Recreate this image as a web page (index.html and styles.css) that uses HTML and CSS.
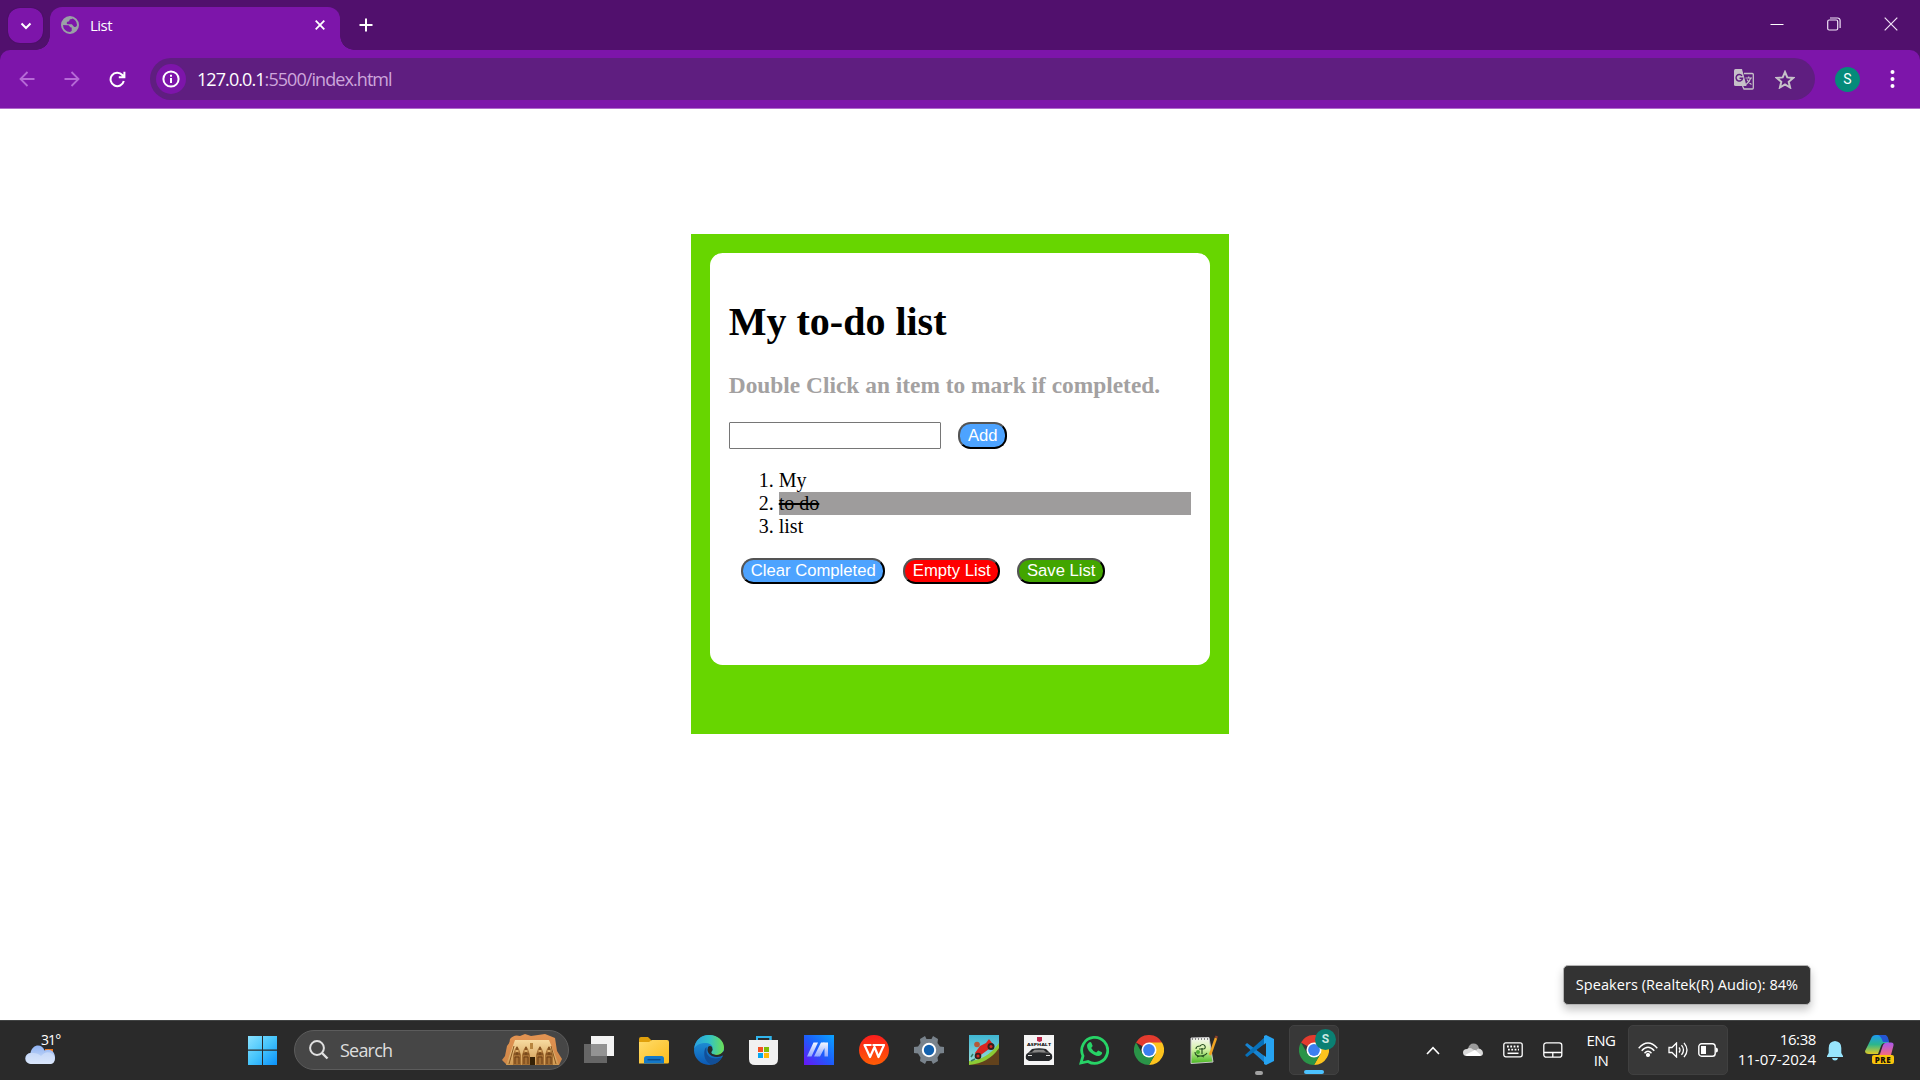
FILE: index.html
```html
<!DOCTYPE html>
<html lang="en">
<head>
<meta charset="utf-8">
<title>List</title>
<link rel="stylesheet" href="styles.css">
</head>
<body>
<svg width="0" height="0" class="defs">
  <defs>
    <linearGradient id="win" x1="0" y1="0" x2="1" y2="1"><stop offset="0" stop-color="#8be2ff"/><stop offset=".5" stop-color="#45c4fb"/><stop offset="1" stop-color="#0a91fb"/></linearGradient>
    <linearGradient id="cloud" x1="0" y1="0" x2="0" y2="1"><stop offset="0" stop-color="#8fb2f2"/><stop offset="1" stop-color="#d8e6fb"/></linearGradient>
    <linearGradient id="fold" x1="0" y1="0" x2="1" y2="1"><stop offset="0" stop-color="#ffdc6b"/><stop offset="1" stop-color="#fcbc1b"/></linearGradient>
    <linearGradient id="edgeTop" x1="0" y1="0" x2="1" y2="0"><stop offset="0" stop-color="#2a9fe0"/><stop offset=".5" stop-color="#31c2c8"/><stop offset="1" stop-color="#6cdf55"/></linearGradient>
    <linearGradient id="edgeLow" x1="0" y1="0" x2="0" y2="1"><stop offset="0" stop-color="#239ddd"/><stop offset="1" stop-color="#0c59b5"/></linearGradient>
    <linearGradient id="asus" x1="0" y1="1" x2="1" y2="0"><stop offset="0" stop-color="#6a13f5"/><stop offset=".5" stop-color="#1d5dfb"/><stop offset="1" stop-color="#0aa4ff"/></linearGradient>
    <linearGradient id="asusBar" x1="0" y1="0" x2="0" y2="1"><stop offset="0" stop-color="#f2f7ff"/><stop offset="1" stop-color="#8fa6ff"/></linearGradient>
    <linearGradient id="wps" x1="0" y1="0" x2="0" y2="1"><stop offset="0" stop-color="#fb1d1d"/><stop offset="1" stop-color="#ff5d05"/></linearGradient>
    <linearGradient id="sky" x1="0" y1="0" x2="0" y2="1"><stop offset="0" stop-color="#3fb6d2"/><stop offset="1" stop-color="#9fe0dc"/></linearGradient>
    <linearGradient id="cliff" x1="0" y1="0" x2="0" y2="1"><stop offset="0" stop-color="#e29352"/><stop offset="1" stop-color="#cf8747"/></linearGradient>
    <linearGradient id="temple" x1="0" y1="0" x2="0" y2="1"><stop offset="0" stop-color="#f7dba0"/><stop offset="1" stop-color="#cf9850"/></linearGradient>
    <linearGradient id="copA" x1="0" y1="0" x2="0" y2="1"><stop offset="0" stop-color="#1d9af0"/><stop offset=".5" stop-color="#2db68c"/><stop offset="1" stop-color="#e2ca25"/></linearGradient>
    <linearGradient id="copB" x1="0" y1="0" x2="0" y2="1"><stop offset="0" stop-color="#a857ee"/><stop offset="1" stop-color="#f56a80"/></linearGradient>
    <linearGradient id="grass" x1="0" y1="0" x2="0" y2="1"><stop offset="0" stop-color="#f6f6f6"/><stop offset=".45" stop-color="#d7f3a8"/><stop offset="1" stop-color="#46b81f"/></linearGradient>
    <symbol id="chrome" viewBox="0 0 30 30">
      <path d="M15 15 2 7.5A15 15 0 0 1 28 7.5Z" fill="#e33b2e"/>
      <path d="M15 7.5h13A15 15 0 0 1 15 30l6.5-11.2Z" fill="#fcc31e"/>
      <path d="M8.5 18.8 2 7.5A15 15 0 0 0 15 30l6.5-11.2Z" fill="#2a9448"/>
      <circle cx="15" cy="15" r="7.5" fill="#fff"/><circle cx="15" cy="15" r="5.9" fill="#3b7ff0"/>
    </symbol>
    <g id="statue"><path d="M1 22V12L3 6l2-3 2 3 2 6v10Z" fill="#a56f33"/><path d="M3 21v-7h4v7M5 4v8M2 11h6" fill="none" stroke="#6d3f14"/><path d="M3.500 7h3v2h-3Z" fill="#dcae68"/></g>
  </defs>
</svg>

<div class="screen">
  <header class="tabstrip">
    <button class="tab-search"><svg width="12" height="8" viewBox="0 0 12 8"><path d="M1.500 1.500 6 6l4.500-4.500" fill="none" stroke="#fff" stroke-width="2"/></svg></button>
    <div class="tab">
      <svg width="18" height="18" viewBox="0 0 18 18"><circle cx="9" cy="9" r="8" fill="none" stroke="#9aa0a6" stroke-width="2"/><path d="M9 1C4 1 1 5 1 9l5.500.2c2.300 0 2 2.300 4.200 2.300V15l-3 2c6 1 9.300-4 9.300-8-1.500 0-1 2-3 2s-1.700-2.800-4-2.800H7c-2 0-1.300-2.700.3-2.700 1.500 0 .7-2.300 2.400-2.300C11.200 3.200 12 2 12 1.500Z" fill="#9aa0a6"/></svg>
      <span class="tab-title">List</span>
      <svg class="tab-close" width="10" height="10" viewBox="0 0 10 10"><path d="m.7.700 8.600 8.600m0-8.600L.7 9.300" stroke="#fff" stroke-width="1.800"/></svg>
    </div>
    <svg class="new-tab" width="14" height="14" viewBox="0 0 14 14"><path d="M7 .5v13M.5 7h13" stroke="#fff" stroke-width="2"/></svg>
    <div class="window-controls">
      <svg width="14" height="14" viewBox="0 0 14 14"><path d="M.5 7.500h13" stroke="#fff" stroke-width="1"/></svg>
      <svg width="14" height="14" viewBox="0 0 14 14" fill="none" stroke="#f1e3f7" stroke-width="1.200"><rect x=".7" y="3" width="10" height="10" rx="1.500"/><path d="M3 1h7.500a2.500 2.500 0 0 1 2.600 2.500V11"/></svg>
      <svg width="14" height="14" viewBox="0 0 14 14"><path d="m.7.700 12.600 12.600m0-12.600L.7 13.300" stroke="#f1e3f7" stroke-width="1.200"/></svg>
    </div>
  </header>

  <nav class="toolbar">
    <svg width="16" height="16" viewBox="0 0 16 16" fill="none" stroke="#b66ad6" stroke-width="1.800"><path d="M15.500 8H2m6.500-7-7 7 7 7"/></svg>
    <svg width="16" height="16" viewBox="0 0 16 16" fill="none" stroke="#b66ad6" stroke-width="1.800"><path d="M.5 8H14M7.500 1l7 7-7 7"/></svg>
    <svg width="17" height="17" viewBox="0 0 17 17" fill="none" stroke="#fff" stroke-width="2"><path d="M14.800 10A6.700 6.700 0 1 1 13.300 4L15 6M15.400.8V6.300H9.800"/></svg>
    <div class="omnibox">
      <span class="site-info"><svg width="18" height="18" viewBox="0 0 18 18"><circle cx="9" cy="9" r="7.600" fill="none" stroke="#fff" stroke-width="2"/><path d="M9 8v5M9 4.700v2" stroke="#fff" stroke-width="2"/></svg></span>
      <span class="url"><b>127.0.0.1</b>:5500/index.html</span>
      <svg class="translate" width="20" height="21" viewBox="0 0 20 21"><path d="M10 4.500h8.300q1 0 1 1V19q0 1-1 1H10l-1.500-3" fill="none" stroke="#c6c1c8" stroke-width="1.300"/><path d="M1.500 0H8l4.500 17H1.500Q0 17 0 15.500v-14Q0 0 1.500 0Z" fill="#c6c1c8"/><path d="M8 6.800a3.300 3.300 0 1 0 .6 2.500H5.500" fill="none" stroke="#5f1e80" stroke-width="1.400"/><path d="M11.500 9H18m-3.300-1.500V9m2 0q-1 4-4.700 6.500m1-5q2 3.500 4.500 5" fill="none" stroke="#c6c1c8" stroke-width="1.200"/></svg>
      <svg width="20" height="19" viewBox="0 0 20 19"><path d="m10 2 2.300 5.400 5.900.5-4.500 3.900 1.400 5.700-5.100-3.100-5.100 3.100 1.400-5.700-4.500-3.900 5.900-.5Z" fill="none" stroke="#c6c1c8" stroke-width="2"/></svg>
    </div>
    <span class="avatar">S</span>
    <svg class="menu" width="5" height="20" viewBox="0 0 5 20" fill="#fff"><circle cx="2.500" cy="3" r="2"/><circle cx="2.500" cy="10" r="2"/><circle cx="2.500" cy="17" r="2"/></svg>
  </nav>

  <main class="page">
    <section class="board">
      <div class="card">
        <h1>My to-do list</h1>
        <h3>Double Click an item to mark if completed.</h3>
        <div class="entry"><input type="text"><button class="btn blue add">Add</button></div>
        <ol><li>My</li><li class="done">to do</li><li>list</li></ol>
        <div class="actions"><button class="btn blue clear">Clear Completed</button><button class="btn red empty">Empty List</button><button class="btn green save">Save List</button></div>
      </div>
    </section>
    <div class="tooltip"><span>Speakers (Realtek(R) Audio): 84%</span></div>
  </main>

  <footer class="taskbar">
    <div class="weather">
      <svg width="31" height="20" viewBox="0 0 31 20"><path d="M20 4h8v8h-8Z" fill="#f0761c"/><path d="M6 19a5.500 5.500 0 0 1-.5-11C7-1 17-2 19.500 5.500 27 3 30 8 30 12.500 30 17 28 19 25 19Z" fill="url(#cloud)"/><path d="M1 12q2-5 7-4 5 0 8 3 4-5 9-3.500 4 1.500 5 6-1 5.500-5 5.500H6q-5-1-5-7Z" fill="#dce8fb" opacity=".55"/></svg>
      <span>31°</span>
    </div>
    <svg class="start" width="30" height="30" viewBox="0 0 30 30" fill="url(#win)"><path d="M0 1h14v13.500H0ZM15 1h14v13.500H15ZM0 15.700h14V30H0ZM15 15.700h14V30H15Z"/></svg>
    <div class="search">
      <svg width="20" height="20" viewBox="0 0 20 20" fill="none" stroke="#e0e0e0" stroke-width="2"><circle cx="8" cy="8" r="6.900"/><path d="m13 13 5.500 5.500" stroke-width="2.400"/></svg>
      <span>Search</span>
      <svg class="art" width="60" height="32" viewBox="0 0 60 32"><path d="M0 26 3 22 5 12Q8 9 8 5 12 0 18 2L23 0 29 2 43 0 53 4 55 17 60 25 57 31H5Z" fill="url(#cliff)"/><path d="M13 6H47L57 31H4Z" fill="url(#temple)"/>
        <use href="#statue" x="10" y="9"/><use href="#statue" x="19" y="9"/><use href="#statue" x="33" y="9"/><use href="#statue" x="42" y="9"/><path d="M28 23h5v8h-5Z" fill="#352106"/><path d="M28 9h3v6h-3Z" fill="#b7853e"/><path d="M7 30 12 12m42 18L49 12" stroke="#8a561f"/></svg>
    </div>
    <div class="apps">
      <svg width="30" height="30" viewBox="0 0 30 30"><path d="M7 1h23v20H7Z" fill="#f3f3f3"/><path d="M0 9h23v19H0Z" fill="#777" opacity=".78"/></svg>
      <svg width="30" height="30" viewBox="0 0 30 30"><path d="M0 4q0-2 2-2h7l4 4v8H0Z" fill="#e0a00c"/><path d="M0 7h10l3-2h15q2 0 2 2v20q0 1.500-1.500 1.500H0Z" fill="url(#fold)"/><path d="M5 28.500v-5Q5 21 7.500 21h15q2.500 0 2.500 2.500v5Z" fill="#1479c9"/><path d="M8.500 24.700h13" stroke="#0a4b8c" stroke-width="1.500"/></svg>
      <svg width="30" height="30" viewBox="0 0 30 30"><circle cx="15" cy="15" r="15" fill="url(#edgeLow)"/><path d="M.2 14C1 5 7 0 15 0c9 0 15 6 15 12.500 0 5-4 7.500-8 7.500-3 0-5-1.500-5-2.500s1.500-1.500 1.500-4.500C18.500 9 14 7.500 10 8 5 8.500 1 11 .2 14Z" fill="url(#edgeTop)"/><path d="M12.500 12C8.500 15 9.500 29 19 29.500c4-1 7.500-4 9-7.500-6 3-15 1.500-15.500-5.500Z" fill="#124f98"/><path d="M14 12q-2 6 4 9 6 2.500 12-1v-4q-4 4-9 3.500-4-.5-3.600-2.500 2-2.500.6-5Q16 10 14 12Z" fill="#292a2b"/><path d="M20 19.500q7-.5 9.700-6.500-.5 7-7.700 7Z" fill="#6edc57"/></svg>
      <svg width="30" height="30" viewBox="0 0 30 30"><path d="M8 8V2h13.500v6" fill="none" stroke="#31b5ec" stroke-width="2"/><path d="M0 5h29v19q0 6-6 6H6q-6 0-6-6Z" fill="#f1f1f1"/><path d="M8 5V2h13.500v3" fill="none" stroke="#31b5ec" stroke-width="2"/><path d="M9 12h5v5H9Z" fill="#f35325"/><path d="M15 12h5v5h-5Z" fill="#81bc06"/><path d="M9 18h5v5H9Z" fill="#05a6f0"/><path d="M15 18h5v5h-5Z" fill="#ffba08"/></svg>
      <svg width="30" height="30" viewBox="0 0 30 30" fill="url(#asusBar)"><path d="M0 0h30v30H0Z" fill="url(#asus)"/><path d="M3 21.500 9.500 7.500H14L7.500 21.500Z"/><path d="M10 21.500 17 7.500h3.500L13.500 21.500Z"/><path d="M19.500 7.500H24v14h-3.500V13l-4.500 8.500h-3Z"/></svg>
      <svg width="30" height="30" viewBox="0 0 30 30"><circle cx="15" cy="15" r="15" fill="url(#wps)"/><path d="M12.500 10H5.500L11 22 15.500 12l4 10L25 10H13.500" fill="none" stroke="#fff" stroke-width="2.200" stroke-linejoin="round"/></svg>
      <svg width="30" height="30" viewBox="0 0 30 30"><path d="m11 1 1.500 3h5L19 1l5 3-.5 4 2.500 3.500 4 .5v6l-4 .5-2.500 4 .5 3.500-5 3-1.500-3h-5l-1.500 3-5-3 .5-3.500L4 18.500 0 18v-6l4-.5L6.500 8 6 4Z" fill="#79838c"/><circle cx="15" cy="15" r="7.200" fill="#fff"/><circle cx="15" cy="15" r="5.200" fill="#1261ae"/></svg>
      <svg width="30" height="30" viewBox="0 0 30 30"><path d="M0 0h30v30H0Z" fill="url(#sky)"/><path d="M0 28Q18 27 30 10v20H0Z" fill="#62421c"/><path d="M0 26Q18 25 30 8v5Q20 28 0 30Z" fill="#8ccb35"/><path d="m6 18 5-7 6-3 3-4 3 4 2 2-5 4-11 8Z" fill="#d92520"/><circle cx="9" cy="21" r="3.300" fill="#34211c"/><circle cx="22" cy="11.500" r="3.500" fill="#34211c"/><circle cx="9" cy="21" r="1.500" fill="#d42a22"/><circle cx="22" cy="11.500" r="1.500" fill="#d42a22"/><circle cx="8" cy="9.500" r="2.800" fill="#b55938"/><path d="m2 22 2-3m-2 7 4-2" stroke="#367a61" stroke-width="1.500"/></svg>
      <svg width="30" height="30" viewBox="0 0 30 30"><path d="M0 0h30v30H0Z" fill="#f5f5f5"/><path d="M13 2h5v4l-2.500 1L13 6Z" fill="#bd284c"/><text x="3" y="11" font-size="3.800" font-weight="700" textLength="24" lengthAdjust="spacingAndGlyphs">ASPHALT</text><path d="M2 24q-1-5 2-6l4-4q7-1.500 14 0l4 4q3 1 2 6l-3 2H5Z" fill="#25272a"/><path d="m8 17 2.500-2.300h9L22 17Z" fill="#888"/><path d="M4 20.500h4m14 0h4" stroke="#ddd"/><path d="M5 18q10-2 20 0" fill="none" stroke="#777" stroke-width=".8"/></svg>
      <svg width="30" height="30" viewBox="0 0 30 30"><path d="m2 28 2-7A13 13 0 1 1 9 26.500Z" fill="none" stroke="#27d366" stroke-width="2.800"/><path d="M9.500 8q2-2 3 0l1.200 3-1.500 2q1.500 3 5 4.500l2-2 3.300 1.500q1.500 1-.5 3-2.500 2-7-.3-7-3.700-7-9 0-1.700 1.500-2.700Z" fill="#27d366"/></svg>
      <svg width="30" height="30"><use href="#chrome"/></svg>
      <svg width="30" height="30" viewBox="0 0 30 30"><path d="m2 3 18-.5L24 27 2 28.500Z" fill="url(#grass)" stroke="#c8c8c8"/><path d="M3 4h17" stroke="#888" stroke-width="2" stroke-dasharray="1 2"/><path d="M7 14q0-3 4-3 3-3 5 0 1 3-2 3h-4m-4 3q0 4 5 4t7-3M8 22q4-2 7 0m-2-9v6" fill="none" stroke="#214b1d" stroke-width="1.100"/><circle cx="9" cy="17" r="2" fill="#4dac33"/><path d="m21 20 6-17" stroke="#f0a423" stroke-width="2.500"/><path d="m27 3 .8-2" stroke="#96412c" stroke-width="2.500"/></svg>
      <svg width="30" height="30" viewBox="0 0 30 30"><path d="m1 10 2-2 19 14v7Z" fill="#1784d2"/><path d="m1 20 2 2L22 8V1Z" fill="#0871ba"/><path d="M22 0 30 4v22l-8 4-2-1V1Z" fill="#26a3f1"/><path d="M22 8v14l-9-7Z" fill="#292a2b"/></svg>
    </div>
    <i class="idle-mark"></i>
    <div class="app-active"><svg width="30" height="30"><use href="#chrome"/></svg><b class="profile">S</b><i></i></div>

    <div class="tray">
      <svg width="14" height="9" viewBox="0 0 14 9"><path d="m1 8 6-6.300L13 8" fill="none" stroke="#fff" stroke-width="1.600"/></svg>
      <svg width="20" height="14" viewBox="0 0 20 14"><path d="M5 6Q6 .5 10.500.500q4.500 0 5.500 5l-4 4H4Z" fill="#9c9c9c"/><path d="M4 13q-4 0-4-3.500T4 6q3-2 6 .5l3 1q2-3 4.500-1.500Q20 7.500 20 10q0 3-3 3Z" fill="#d9d9d9"/><path d="m2 12 10-5 6 5-1 1H4Z" fill="#fff"/></svg>
      <svg width="20" height="16" viewBox="0 0 20 16"><rect x=".8" y=".8" width="18.400" height="14" rx="2" fill="none" stroke="#fff" stroke-width="1.300"/><path d="M4 4.500h12M5 7.700h11" stroke="#fff" stroke-width="1.800" stroke-dasharray="1.800 1.500"/><path d="M4.500 11.300h11" stroke="#fff" stroke-width="1.500"/></svg>
      <svg width="20" height="16" viewBox="0 0 20 16" fill="none" stroke="#fff" stroke-width="1.300"><rect x=".8" y=".8" width="18" height="14.400" rx="2.500"/><path d="M1 10.500h18M9.800 10.500V15"/></svg>
    </div>
    <div class="lang">ENG<br>IN</div>
    <div class="system">
      <svg width="20" height="16" viewBox="0 0 20 16" fill="none" stroke="#fff" stroke-width="1.400"><path d="M.7 6.200q9.300-10.400 18.600 0M3.700 8.800q6.300-7 12.600 0M6.500 11.300q3.500-4 7 0"/><circle cx="10" cy="13" r="1.400" fill="#fff"/></svg>
      <svg width="20" height="16" viewBox="0 0 20 16" fill="none" stroke="#fff" stroke-width="1.300"><path d="M1 5.500h3L8.500 1v14L4 10.500H1ZM11 5.500q2 2.500 0 5M13.500 3.200q4 4.800 0 9.600M16 .8q6 7.200 0 14.400"/></svg>
      <svg width="20" height="14" viewBox="0 0 20 14"><rect x=".8" y=".8" width="16.400" height="12.400" rx="2.800" fill="none" stroke="#fff" stroke-width="1.400"/><path d="M3 3h5v8H3ZM18 4.500q2 0 2 2.500t-2 2.500Z" fill="#fff"/></svg>
    </div>
    <div class="clock"><span>16:38</span><span class="date">11-07-2024</span></div>
    <svg class="bell" width="16" height="20" viewBox="0 0 16 20" fill="#98e5fd"><path d="M8 0q6.300.5 6.300 7v5L16 15v1H0v-1l1.700-3V7Q1.700.500 8 0ZM5 17h6q-.5 2.500-3 2.500T5 17Z"/></svg>
    <div class="copilot"><svg width="30" height="30" viewBox="0 0 30 30"><path d="M6 4q1-4 5-4h8q3 0 4 5l1 3h-4q-3 0-4 3l-3 8H4q-4 0-4-3Z" fill="url(#copA)"/><path d="M13 0h7q3 0 4 7h-6Q16 1 13 0Z" fill="#2456d4"/><path d="M15 19 18 10q1-2.500 4-2.500h4q3 0 2.500 3L26 20H14Z" fill="url(#copB)"/></svg><b>PRE</b></div>
  </footer>
</div>
</body>
</html>
```
FILE: styles.css
```css
* { box-sizing: border-box; }
body { margin: 0; background: #fff; overflow: hidden; }
svg { display: block; flex: none; }
.defs { position: absolute; }
.screen { width: 1920px; height: 1080px; display: flex; flex-direction: column; font-family: "Open Sans", "Noto Sans", sans-serif; background: #51106d; }

/* Browser window */
.tabstrip { height: 50px; padding: 7px 17px 0 8px; display: flex; align-items: flex-start; background: #51106d; }
.tab-search { width: 35px; height: 35px; margin-top: 1px; padding: 0; border: 0; border-radius: 12px; background: #7d15aa; display: grid; place-items: center; box-shadow: 0 0 1px #33094a; }
.tab { position: relative; width: 290px; height: 43px; margin-left: 7px; padding: 0 15px 7px 11px; display: flex; align-items: center; background: #7d15aa; border-radius: 12px 12px 0 0; color: #fff; font-size: 15px; }
.tab::before, .tab::after { content: ""; position: absolute; bottom: 0; width: 14px; height: 14px; }
.tab::before { left: -14px; background: radial-gradient(circle at 0 0, transparent 13.5px, #7d15aa 14px); }
.tab::after { right: -14px; background: radial-gradient(circle at 100% 0, transparent 13.5px, #7d15aa 14px); }
.tab-title { margin-left: 11px; letter-spacing: -.5px; }
.tab-close { margin-left: auto; }
.new-tab { margin: 11px 0 0 19px; }
.window-controls { margin: 10px 5px 0 auto; display: flex; gap: 43px; }
.toolbar { height: 59px; padding: 8px 25px 8px 19px; display: flex; align-items: center; background: #7d15aa; border-radius: 10px 10px 0 0; border-bottom: 1px solid #b06acb; flex: none; }
.toolbar > svg + svg { margin-left: 29px; }
.omnibox { width: 1665px; height: 42px; margin-left: 24px; padding: 0 20px 0 6px; border-radius: 21px; background: #5f1e80; display: flex; align-items: center; }
.site-info { width: 30px; height: 30px; border-radius: 50%; background: #7d15aa; display: grid; place-items: center; }
.url { margin-left: 11px; font-size: 18px; color: #cda6db; letter-spacing: -.93px; line-height: 24px; }
.url b { font-weight: 400; color: #fff; }
.translate { margin: 0 21px 0 auto; }
.avatar { width: 25px; height: 25px; margin-left: 20px; border-radius: 50%; background: #058b7a; color: #fff; font: 14px/25px Roboto, sans-serif; text-align: center; }
.toolbar > .menu { margin-left: auto; }

/* Page */
.page { position: relative; height: 911px; flex: none; padding-top: 125px; background: #fff; font-family: "Liberation Serif", serif; color: #000; }
.board { width: 537.5px; height: 500px; margin: 0 auto; padding: 18.75px; background: #67d600; }
.card { height: 412px; padding: 19.75px 18.75px 18.75px; background: #fff; border-radius: 12.5px; }
h1 { margin: 26.8px 0; font-size: 40px; line-height: 46px; }
h3 { margin: 0 0 23.4px; font-size: 23.4px; line-height: 27px; color: #a3a1a1; white-space: nowrap; }
.entry { height: 27px; display: flex; gap: 17px; }
input { width: 212.5px; height: 27px; margin: 0; border: 1px solid #767676; border-radius: 1px; }
.btn { height: 26px; padding: 0; border: 2px outset #000; border-radius: 12.5px; color: #fff; font: 16.67px/20px "Liberation Sans", Arial, sans-serif; white-space: nowrap; }
.blue { background: #4da3ff; }
.red { background: #f00; }
.green { background: #42a500; }
.add { width: 49px; height: 27px; }
ol { margin: 20px 0; padding-left: 50px; font-size: 20px; line-height: 23px; }
.done { background: #9e9c9c; text-decoration: line-through; }
.actions { display: flex; gap: 17px; padding-left: 12.5px; }
.clear { width: 144px; margin-right: 1px; }
.empty { width: 97px; }
.save { width: 88px; }
.tooltip { position: absolute; left: 1563px; top: 856px; width: 248px; height: 40px; display: grid; place-items: center; background: #333; border: 1px solid #b4b4b4; border-radius: 5px; color: #fff; font: 14.5px/20px "Open Sans", sans-serif; letter-spacing: .06px; white-space: nowrap; box-shadow: 0 5px 8px rgba(0,0,0,.22); }

/* Taskbar */
.taskbar { height: 60px; flex: none; display: flex; align-items: center; background: #2a2a2a; border-top: 1px solid #414343; padding-bottom: 1px; color: #fff; font-size: 15px; }
.weather { width: 60px; height: 59px; margin: 0 188px 0 0; padding: 24px 0 0 25px; position: relative; }
.weather span { position: absolute; left: 41px; top: 9px; font-size: 14px; line-height: 20px; letter-spacing: -.9px; }
.search { width: 275px; height: 40px; margin: 0 15px 0 16px; padding: 0 6px 0 14px; border-radius: 20px; border: 1px solid #5c5c5c; background: #464646; display: flex; align-items: center; color: #dedede; font-size: 18px; letter-spacing: -.8px; }
.search span { margin-left: 11px; }
.art { margin-left: auto; }
.apps { display: flex; gap: 25px; }
.idle-mark { width: 8px; height: 4px; margin: 45px 0 0 -19px; border-radius: 2px; background: #a2a2a2; }
.app-active { position: relative; width: 50px; height: 50px; margin-left: 26px; padding: 9px; background: #383838; border: 1px solid #414141; border-radius: 5px; }
.profile { position: absolute; left: 25px; top: 3px; width: 21px; height: 21px; border-radius: 50%; background: #0a8073; color: #c8e8e2; font: 700 12px/21px Roboto, sans-serif; text-align: center; }
.app-active i { position: absolute; left: 14px; bottom: 0; width: 20px; height: 4px; border-radius: 2px; background: #4cc2ff; }
.tray { display: flex; align-items: center; margin-left: 87px; gap: 20px; }
.tray svg:first-child { margin-right: 3px; }
.lang { width: 40px; margin: 0 7px 0 18px; padding-bottom: 1px; text-align: center; line-height: 20px; letter-spacing: -.5px; }
.system { width: 100px; height: 50px; display: flex; align-items: center; justify-content: center; gap: 10px; background: #383838; border: 1px solid #404040; border-radius: 5px; }
.clock { width: 88px; padding-bottom: 3px; display: flex; flex-direction: column; align-items: flex-end; line-height: 20px; letter-spacing: -.4px; }
.date { white-space: nowrap; letter-spacing: 0; }
.bell { margin: 1px 22px 0 11px; }
.copilot { position: relative; width: 30px; height: 30px; }
.copilot b { position: absolute; left: 7px; top: 20px; width: 22px; height: 9px; border-radius: 2px; background: #f8c40c; color: #171006; font: 800 8px/9px "Open Sans", sans-serif; text-align: center; letter-spacing: .5px; }
```
